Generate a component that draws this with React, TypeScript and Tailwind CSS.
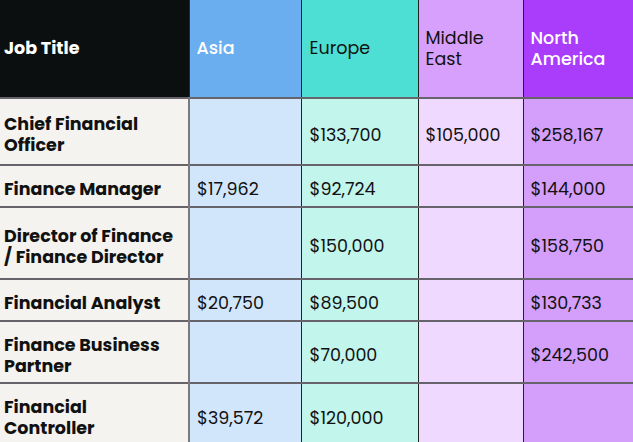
const rows: { title: string; asia: string; europe: string; me: string; na: string; h: string }[] = [
  { title: 'Chief Financial Officer', asia: '', europe: '$133,700', me: '$105,000', na: '$258,167', h: 'h-[67px]' },
  { title: 'Finance Manager', asia: '$17,962', europe: '$92,724', me: '', na: '$144,000', h: 'h-[42px]' },
  { title: 'Director of Finance / Finance Director', asia: '', europe: '$150,000', me: '', na: '$158,750', h: 'h-[72px]' },
  { title: 'Financial Analyst', asia: '$20,750', europe: '$89,500', me: '', na: '$130,733', h: 'h-[42px]' },
  { title: 'Finance Business Partner', asia: '', europe: '$70,000', me: '', na: '$242,500', h: 'h-[62px]' },
  { title: 'Financial Controller', asia: '$39,572', europe: '$120,000', me: '', na: '', h: 'h-[62px]' },
];

export default function App() {
  return (
    <div className="w-[633px] h-[442px] overflow-hidden bg-white font-['Poppins','DejaVu_Sans',sans-serif] text-[#111]">
      <table className="table-fixed border-collapse w-[633px]">
        <colgroup>
          <col className="w-[189px]" />
          <col className="w-[112px]" />
          <col className="w-[117px]" />
          <col className="w-[105px]" />
          <col className="w-[110px]" />
        </colgroup>
        <thead>
          <tr className="h-[98px] text-[17.5px] leading-[21px]">
            <th className="bg-[#0b0f0f] text-white text-left font-bold pl-[4px] pr-[12px] align-middle border-r border-[#2a2a2a]">
              Job Title
            </th>
            <th className="bg-[#6aaef0] text-white text-left font-medium px-[7px] align-middle border-r border-[#222]">
              Asia
            </th>
            <th className="bg-[#4ddfd3] text-left font-normal px-[8px] align-middle border-r border-[#222]">
              Europe
            </th>
            <th className="bg-[#d6a0fc] text-left font-normal px-[7px] align-middle border-r border-[#222]">
              Middle
              <br />
              East
            </th>
            <th className="bg-[#aa3dfb] text-white text-left font-medium px-[7px] align-middle">
              North
              <br />
              America
            </th>
          </tr>
        </thead>
        <tbody className="text-[17.5px] leading-[21px]">
          {rows.map((r) => (
            <tr key={r.title} className={`${r.h} border-t-2 border-[#66636b]`}>
              <td className="bg-[#f4f3ef] font-bold pl-[4px] pr-[12px] pt-[7px] pb-0 align-middle border-r-2 border-[#7a7a7a]">{r.title}</td>
              <td className="bg-[#d2e6fb] px-[7px] pt-[7px] pb-0 align-middle border-r border-[#222]">{r.asia}</td>
              <td className="bg-[#c2f5ec] px-[8px] pt-[7px] pb-0 align-middle border-r border-[#222]">{r.europe}</td>
              <td className="bg-[#f0d9ff] px-[7px] pt-[7px] pb-0 align-middle border-r border-[#222]">{r.me}</td>
              <td className="bg-[#d49efb] px-[7px] pt-[7px] pb-0 align-middle">{r.na}</td>
            </tr>
          ))}
        </tbody>
      </table>
    </div>
  );
}
